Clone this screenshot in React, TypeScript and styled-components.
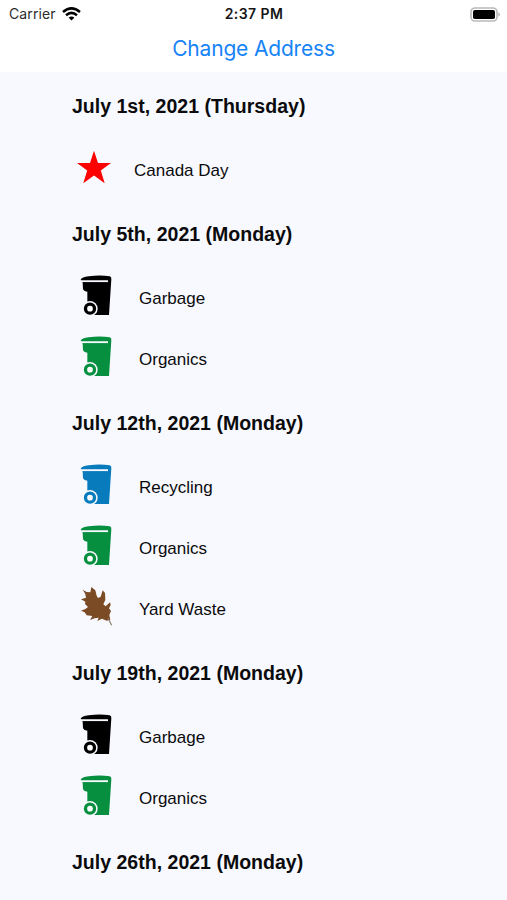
import React from "react";
import styled, { createGlobalStyle } from "styled-components";

const GlobalStyle = createGlobalStyle`
  * { box-sizing: border-box; }
  body { margin: 0; background: #f8f9fe; }
`;

const Screen = styled.div`
  width: 100%;
  height: 900px;
  overflow: hidden;
  display: flex;
  flex-direction: column;
  background: #f8f9fe;
  color: #0b0b0d;
  font-family: "Liberation Sans", Arial, sans-serif;
`;

const TopArea = styled.header`
  flex: none;
  height: 72px;
  background: #fff;
  font-family: Inter, sans-serif;
`;

const StatusBar = styled.div`
  display: grid;
  grid-template-columns: 1fr auto 1fr;
  align-items: center;
  height: 28px;
  padding: 0 6px 0 8px;
`;

const Carrier = styled.div`
  display: flex;
  align-items: center;
  gap: 6px;
  padding-left: 1px;
  font-size: 14px;
  line-height: 28px;
  letter-spacing: 0.1px;
  color: #2c2c2c;
`;

const Clock = styled.div`
  font-size: 14px;
  font-weight: 600;
  line-height: 28px;
  letter-spacing: 0.42px;
  margin-right: 1px;
  color: #161616;
`;

const BatterySlot = styled.div`
  display: flex;
  justify-content: flex-end;
  height: 26px;
  align-items: center;
`;

const AddressButton = styled.button`
  display: block;
  width: 100%;
  height: 42px;
  padding: 0;
  border: 0;
  background: none;
  color: #1683f7;
  font: 400 21px/42px Inter, sans-serif;
  letter-spacing: -0.18px;
`;

const Schedule = styled.main`
  flex: 1;
  min-height: 0;
  overflow: hidden;
  padding-left: 72px;
`;

const DateHeading = styled.h2`
  margin: 0;
  height: 67px;
  font-size: 19.55px;
  font-weight: 700;
  line-height: 68px;
  white-space: nowrap;
`;

const Row = styled.div<{ $holiday: boolean }>`
  display: flex;
  height: 61px;
  padding-left: ${(p) => (p.$holiday ? 4 : 6)}px;
  gap: ${(p) => (p.$holiday ? 22 : 27)}px;
`;

const Label = styled.span`
  font-size: 17px;
  line-height: 64px;
  white-space: nowrap;
`;

const Glyph = styled.svg`
  display: block;
  flex: none;
`;

type Kind = "star" | "garbage" | "organics" | "recycling" | "leaf";

const binColors: Record<string, string> = {
  garbage: "#000",
  organics: "#078f40",
  recycling: "#087bbd",
};

function Bin({ color }: { color: string }) {
  return (
    <Glyph width="34" height="60" viewBox="24 6 102 180">
      <path
        d="M32 44Q35 37 56 34Q90 29 119 34Q125 36 124 43L117 150H60L52 122V80Q42 80 39 73L38 53Z"
        fill={color}
      />
      <path d="M32 48.5H114" stroke="#f8f9fe" strokeWidth="5.5" />
      <circle cx="60" cy="131" r="23" fill="#f8f9fe" />
      <circle cx="60" cy="131" r="13.5" fill="#fff" stroke={color} strokeWidth="10" />
    </Glyph>
  );
}

function Leaf() {
  return (
    <Glyph width="34" height="60" viewBox="24 9 102 180">
      <path
        d="M38 44L50 51L61 52L64 36L76 46L80 62L84 69L92 65L98 46L105 54L106 74L100 88L107 94L120 82L122 90L117 100L123 108L118 120L121 134L110 137L96 131L82 138L86 128L74 130L60 135L67 123L50 121L44 112L33 107L46 102L54 96L45 87L46 80L33 73L48 68L46 57Z"
        fill="#7b4b26"
      />
      <path d="M114 130Q120 141 125 151" fill="none" stroke="#8c7869" strokeWidth="3.5" />
    </Glyph>
  );
}

function Star() {
  return (
    <Glyph width="36" height="61" viewBox="0 0 36 61">
      <path
        d="M18 11.7L22 23.9H35L24.8 31.6L28.7 44.2L18 36.5L7.3 44.2L11.2 31.6L1 23.9H14Z"
        fill="#fe0000"
      />
    </Glyph>
  );
}

function Icon({ kind }: { kind: Kind }) {
  if (kind === "star") return <Star />;
  if (kind === "leaf") return <Leaf />;
  return <Bin color={binColors[kind]} />;
}

const days: { date: string; items: [Kind, string][] }[] = [
  { date: "July 1st, 2021 (Thursday)", items: [["star", "Canada Day"]] },
  { date: "July 5th, 2021 (Monday)", items: [["garbage", "Garbage"], ["organics", "Organics"]] },
  {
    date: "July 12th, 2021 (Monday)",
    items: [["recycling", "Recycling"], ["organics", "Organics"], ["leaf", "Yard Waste"]],
  },
  { date: "July 19th, 2021 (Monday)", items: [["garbage", "Garbage"], ["organics", "Organics"]] },
  { date: "July 26th, 2021 (Monday)", items: [] },
];

export default function App() {
  return (
    <Screen>
      <GlobalStyle />
      <TopArea>
        <StatusBar>
          <Carrier>
            Carrier
            <Glyph width="19" height="14" viewBox="0 0 19 14">
              <g fill="none" stroke="#000" strokeWidth="2.5">
                <path d="M1 5Q9.5 -2.2 18 5" />
                <path d="M4 8.2Q9.5 3.6 15 8.2" />
              </g>
              <path d="M6.6 10.6Q9.5 8.2 12.4 10.6L9.5 13.6Z" />
            </Glyph>
          </Carrier>
          <Clock>2:37 PM</Clock>
          <BatterySlot>
            <Glyph width="31" height="15" viewBox="0 0 31 15">
              <rect x="1" y="1" width="26" height="13" rx="4" fill="#fff" stroke="#b9b9b9" strokeWidth="1.6" />
              <rect x="3" y="3" width="22" height="9" rx="1.8" fill="#000" />
              <path d="M28.5 5.3Q31 7.5 28.5 9.7Z" fill="#999" />
            </Glyph>
          </BatterySlot>
        </StatusBar>
        <AddressButton>Change Address</AddressButton>
      </TopArea>
      <Schedule>
        {days.map((day) => (
          <section key={day.date}>
            <DateHeading>{day.date}</DateHeading>
            {day.items.map(([kind, label]) => (
              <Row key={label} $holiday={kind === "star"}>
                <Icon kind={kind} />
                <Label>{label}</Label>
              </Row>
            ))}
          </section>
        ))}
      </Schedule>
    </Screen>
  );
}
